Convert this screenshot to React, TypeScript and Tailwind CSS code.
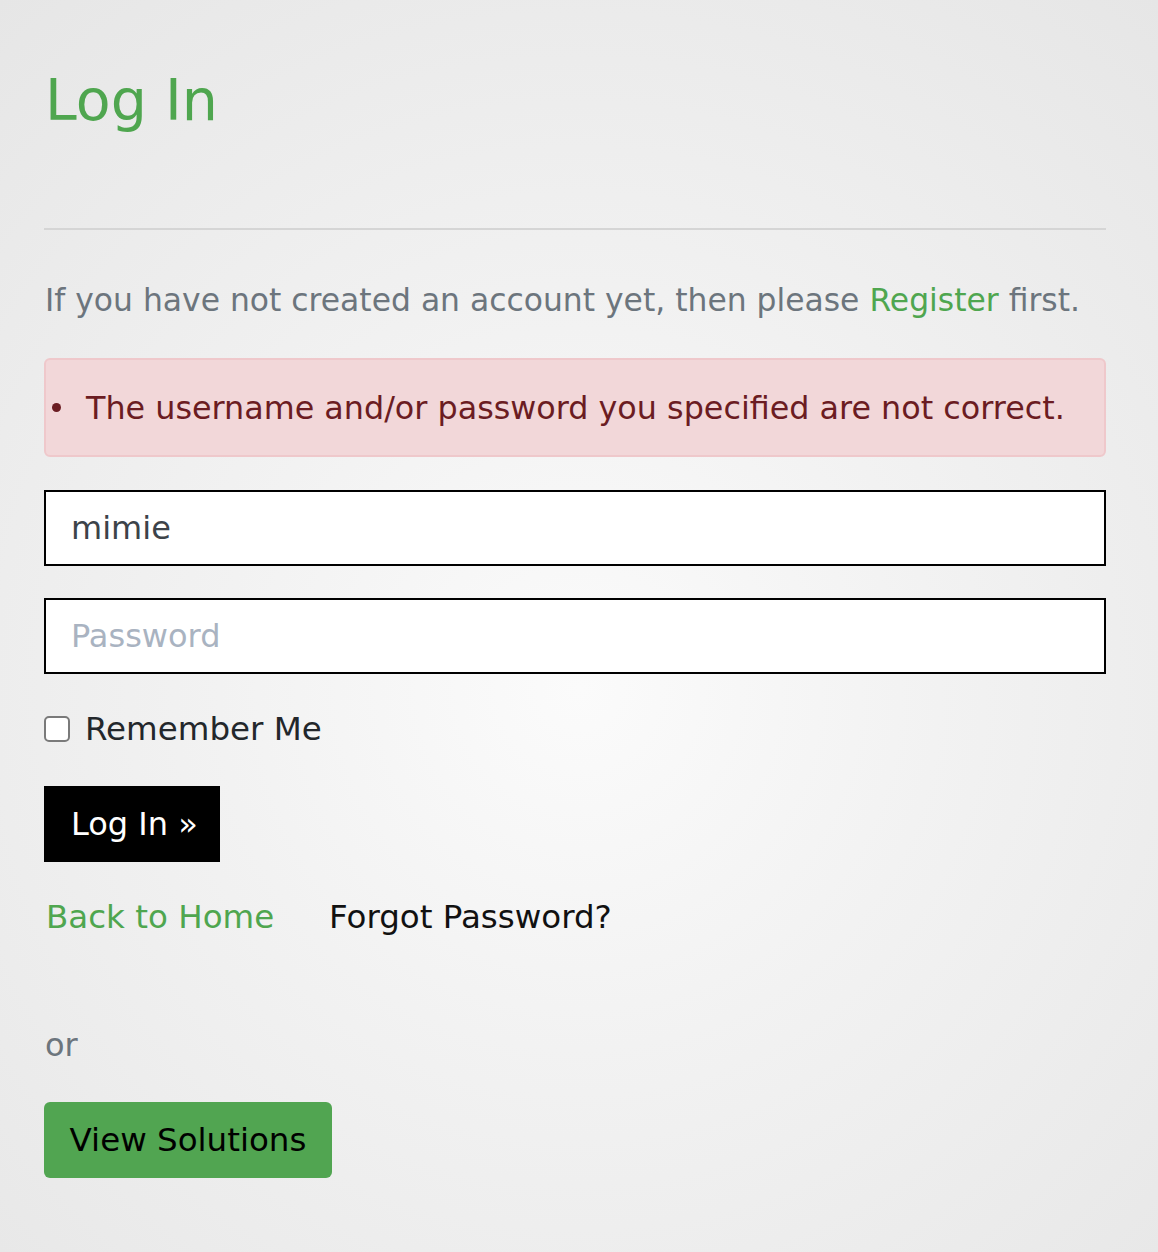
import { useState } from "react";

const font = "font-['DejaVu_Sans',sans-serif]";

function App() {
  const [user, setUser] = useState("mimie");
  const [remember, setRemember] = useState(false);

  return (
    <div
      className={`min-h-screen bg-[radial-gradient(circle_at_50%_55%,#fbfbfb_0%,#f2f2f2_40%,#e6e6e6_100%)] pl-[44px] pr-[52px] pt-[70px] pb-[74px] ${font}`}
    >
      <h1 className="text-[57px] leading-[60px] text-[#4fa64f] pl-[1px]">Log In</h1>

      <hr className="mt-[98px] border-0 border-t-2 border-[#d5d5d5]" />

      <p className="mt-[50px] text-[31.4px] leading-[40px] text-[#6c757d] pl-[1px]">
        If you have not created an account yet, then please{" "}
        <a href="#" className="text-[#4fa64f]">
          Register
        </a>{" "}
        first.
      </p>

      <div className="mt-[38px] h-[99px] flex items-center rounded-[6px] border-2 border-[#efc8cb] bg-[#f2d7d9] text-[#6b1c22]">
        <span className="ml-[6px] w-[9px] h-[9px] rounded-full bg-[#6b1c22]" />
        <span className="ml-[25px] text-[31.8px] leading-[40px]">
          The username and/or password you specified are not correct.
        </span>
      </div>

      <form className="flex flex-col" onSubmit={(e) => e.preventDefault()}>
        <input
          value={user}
          onChange={(e) => setUser(e.target.value)}
          className="mt-[33px] h-[76px] border-2 border-black bg-white pl-[25px] text-[32px] text-[#3d4349] outline-none"
        />
        <input
          type="password"
          placeholder="Password"
          className="mt-[32px] h-[76px] border-2 border-black bg-white pl-[25px] text-[32px] text-[#3d4349] placeholder:text-[#a9b3c1] outline-none"
        />

        <label className="mt-[35px] flex items-center h-[40px] cursor-pointer">
          <span
            onClick={() => setRemember(!remember)}
            className="w-[26px] h-[26px] rounded-[5px] border-2 border-[#7a7a7a] bg-white flex items-center justify-center"
          >
            {remember && <span className="w-[12px] h-[12px] bg-[#333]" />}
          </span>
          <span className="ml-[15px] text-[32.5px] text-[#23272b]">Remember Me</span>
        </label>

        <div className="mt-[37px]">
          <button className="h-[76px] w-[176px] bg-black text-white text-[32px] text-left pl-[27px]">
            Log In »
          </button>
        </div>
      </form>

      <div className="mt-[35px] flex items-center h-[40px] text-[32.5px]">
        <a href="#" className="w-[285px] pl-[2px] text-[#4fa64f]">
          Back to Home
        </a>
        <a href="#" className="text-[#111]">
          Forgot Password?
        </a>
      </div>

      <p className="mt-[88px] text-[32px] leading-[40px] text-[#6c757d] pl-[1px]">or</p>

      <div className="mt-[37px]">
        <button className="h-[76px] w-[288px] rounded-[6px] bg-[#51a551] text-[32.5px] text-black">
          View Solutions
        </button>
      </div>
    </div>
  );
}

export default App;
